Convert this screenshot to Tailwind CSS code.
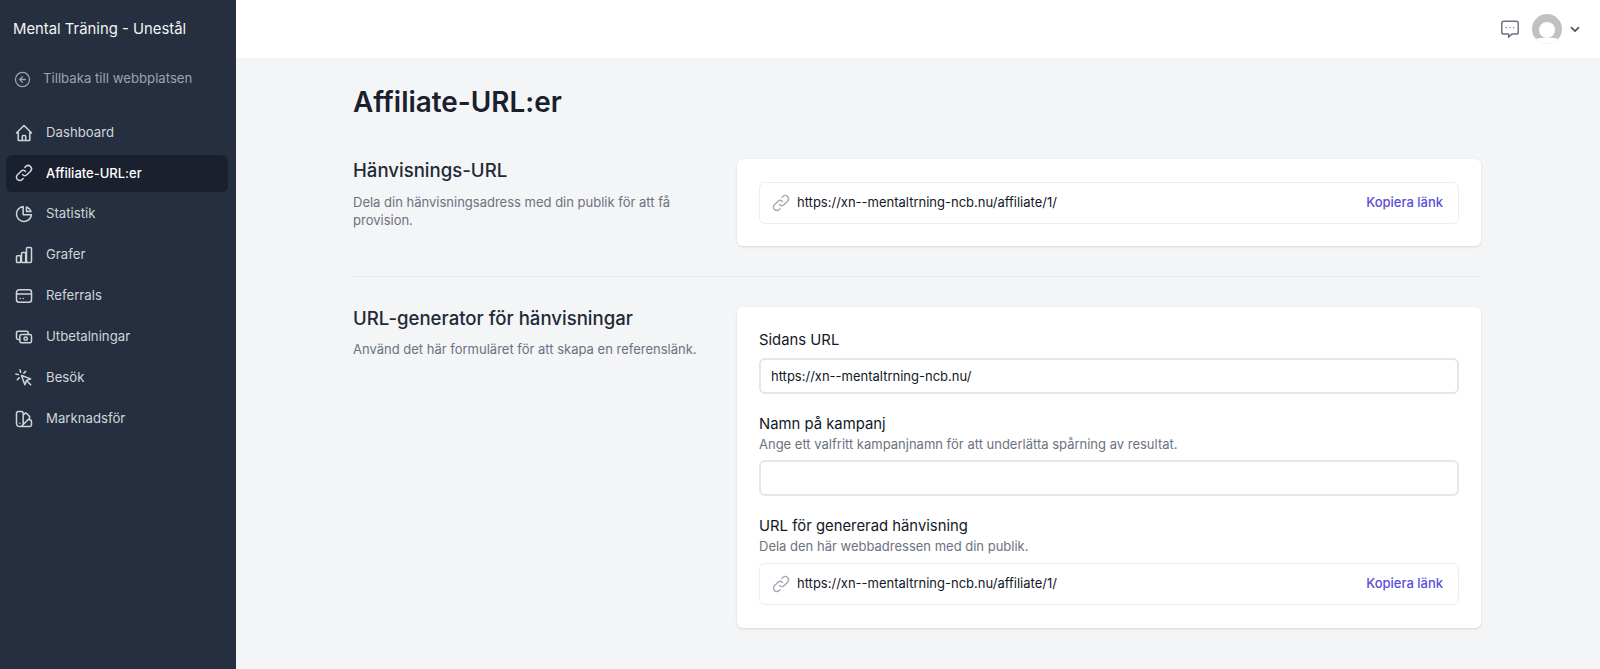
<!DOCTYPE html>
<html lang="sv">

<head>
    <meta charset="UTF-8">
    <meta name="viewport" content="width=device-width, initial-scale=1">
    <title>Affiliate-URL:er</title>
    <script src="https://cdn.jsdelivr.net/npm/@tailwindcss/browser@4"></script>
</head>

<body class="h-[669px] overflow-hidden flex bg-[#f3f5f6] font-['Inter',sans-serif] text-[#111827]">

    <!-- Sidebar -->
    <aside class="w-[236px] shrink-0 bg-[#252f3f] flex flex-col">
        <div class="h-[58px] flex items-center px-[13px] text-[14.85px] text-[#f3f4f6]">Mental Träning - Unestål</div>

        <a class="h-[40px] mt-[1px] flex items-center pl-[14px] text-[13.2px] text-[#9ca3af]">
            <svg class="w-[17px] h-[17px] mr-[12px]" fill="none" viewBox="0 0 24 24" stroke="currentColor" stroke-width="1.8">
                <circle cx="12" cy="12" r="10" />
                <path stroke-linecap="round" stroke-linejoin="round" d="M12 8l-4 4 4 4M8 12h8" />
            </svg>
            Tillbaka till webbplatsen
        </a>

        <nav class="mt-[15px] pl-[6px] pr-[8px] flex flex-col gap-[3.9px] text-[13.2px] text-[#d1d5db]">
            <a class="h-[37px] flex items-center pl-[8px] rounded-md">
                <svg class="w-[20px] h-[20px] mr-[12px]" fill="none" viewBox="0 0 24 24" stroke="currentColor" stroke-width="1.8">
                    <path stroke-linecap="round" stroke-linejoin="round" d="M3 12l2-2m0 0l7-7 7 7M5 10v10a1 1 0 001 1h3m10-11l2 2m-2-2v10a1 1 0 01-1 1h-3m-6 0a1 1 0 001-1v-4a1 1 0 011-1h2a1 1 0 011 1v4a1 1 0 001 1m-6 0h6" />
                </svg>
                Dashboard
            </a>
            <a class="h-[37px] flex items-center pl-[8px] rounded-md bg-[#1a202e] text-white text-[13px] font-medium">
                <svg class="w-[20px] h-[20px] mr-[12px] text-[#d1d5db]" fill="none" viewBox="0 0 24 24" stroke="currentColor" stroke-width="1.8">
                    <path stroke-linecap="round" stroke-linejoin="round" d="M13.828 10.172a4 4 0 00-5.656 0l-4 4a4 4 0 105.656 5.656l1.102-1.101m-.758-4.899a4 4 0 005.656 0l4-4a4 4 0 00-5.656-5.656l-1.1 1.1" />
                </svg>
                Affiliate-URL:er
            </a>
            <a class="h-[37px] flex items-center pl-[8px] rounded-md">
                <svg class="w-[20px] h-[20px] mr-[12px]" fill="none" viewBox="0 0 24 24" stroke="currentColor" stroke-width="1.8">
                    <path stroke-linecap="round" stroke-linejoin="round" d="M11 3.055A9.001 9.001 0 1020.945 13H11V3.055z" />
                    <path stroke-linecap="round" stroke-linejoin="round" d="M20.488 9H15V3.512A9.025 9.025 0 0120.488 9z" />
                </svg>
                Statistik
            </a>
            <a class="h-[37px] flex items-center pl-[8px] rounded-md">
                <svg class="w-[20px] h-[20px] mr-[12px]" fill="none" viewBox="0 0 24 24" stroke="currentColor" stroke-width="1.8">
                    <path stroke-linecap="round" stroke-linejoin="round" d="M3 14a1 1 0 011-1h3a1 1 0 011 1v6a1 1 0 01-1 1H4a1 1 0 01-1-1v-6zM9 10a1 1 0 011-1h3a1 1 0 011 1v11h-4a1 1 0 01-1-1V10zM15 4a1 1 0 011-1h3.5a1.5 1.5 0 011.5 1.5V19.5a1.5 1.5 0 01-1.5 1.5H16a1 1 0 01-1-1V4z" />
                </svg>
                Grafer
            </a>
            <a class="h-[37px] flex items-center pl-[8px] rounded-md">
                <svg class="w-[20px] h-[20px] mr-[12px]" fill="none" viewBox="0 0 24 24" stroke="currentColor" stroke-width="1.8">
                    <rect x="3" y="4.5" width="18" height="15" rx="3" />
                    <path stroke-linecap="round" d="M3 9.5h18M7.5 15h.01M11 15h.01" />
                </svg>
                Referrals
            </a>
            <a class="h-[37px] flex items-center pl-[8px] rounded-md">
                <svg class="w-[20px] h-[20px] mr-[12px]" fill="none" viewBox="0 0 24 24" stroke="currentColor" stroke-width="1.8">
                    <path stroke-linecap="round" stroke-linejoin="round" d="M17 9V7a2 2 0 00-2-2H5a2 2 0 00-2 2v6a2 2 0 002 2h2m2 4h10a2 2 0 002-2v-6a2 2 0 00-2-2H9a2 2 0 00-2 2v6a2 2 0 002 2zm7-5a2 2 0 11-4 0 2 2 0 014 0z" />
                </svg>
                Utbetalningar
            </a>
            <a class="h-[37px] flex items-center pl-[8px] rounded-md">
                <svg class="w-[20px] h-[20px] mr-[12px]" fill="none" viewBox="0 0 24 24" stroke="currentColor" stroke-width="1.8">
                    <path stroke-linecap="round" stroke-linejoin="round" d="M15 15l-2 5L9 9l11 4-5 2zm0 0l5 5M7.188 2.239l.777 2.897M5.136 7.965l-2.898-.777M13.95 4.05l-2.122 2.122m-5.657 5.656l-2.12 2.122" />
                </svg>
                Besök
            </a>
            <a class="h-[37px] flex items-center pl-[8px] rounded-md">
                <svg class="w-[20px] h-[20px] mr-[12px]" fill="none" viewBox="0 0 24 24" stroke="currentColor" stroke-width="1.8">
                    <path stroke-linecap="round" stroke-linejoin="round" d="M7 21a4 4 0 01-4-4V5a2 2 0 012-2h4a2 2 0 012 2v12a4 4 0 01-4 4zm0 0h12a2 2 0 002-2v-4a2 2 0 00-2-2h-2.343M11 7.343l1.657-1.657a2 2 0 012.828 0l2.829 2.829a2 2 0 010 2.828l-8.486 8.485M7 17h.01" />
                </svg>
                Marknadsför
            </a>
        </nav>
    </aside>

    <div class="flex-1 min-w-0 flex flex-col">
        <!-- Top bar -->
        <header class="h-[58px] shrink-0 bg-white flex items-center justify-end pr-[18px]">
            <svg class="w-[22px] h-[22px] text-[#6b7280]" fill="none" viewBox="0 0 24 24" stroke="currentColor" stroke-width="1.6">
                <path stroke-linejoin="round" d="M5 3.5h14a2 2 0 012 2v10a2 2 0 01-2 2h-5l-3.5 3.5v-3.5H5a2 2 0 01-2-2v-10a2 2 0 012-2z" />
                <path stroke-linecap="round" d="M8 10.5h.01M12 10.5h.01M16 10.5h.01" />
            </svg>
            <div class="ml-[11px] w-[30px] h-[30px] rounded-full bg-[#c1c1c1] overflow-hidden relative">
                <div class="absolute left-[7px] top-[8px] w-[16px] h-[16px] rounded-full bg-white"></div>
                <div class="absolute left-[-2px] top-[24px] w-[34px] h-[20px] rounded-full bg-white"></div>
            </div>
            <svg class="ml-[6px] w-[14px] h-[14px] text-[#4b5563]" fill="none" viewBox="0 0 20 20" stroke="currentColor" stroke-width="2.4">
                <path stroke-linecap="round" stroke-linejoin="round" d="M5 8l5 5 5-5" />
            </svg>
        </header>

        <main class="pl-[117px] pr-[119px]">
            <h1 class="mt-[26px] text-[27.9px] leading-[36px] font-semibold text-[#1a202c]">Affiliate-URL:er</h1>

            <!-- Referral URL -->
            <section class="mt-[39px] flex">
                <div class="w-[384px] shrink-0">
                    <h2 class="mt-[-1px] text-[18.6px] leading-[24px] font-medium text-[#1f2937]">Hänvisnings-URL</h2>
                    <p class="mt-[11px] w-[340px] text-[13px] leading-[18.4px] text-[#6b7280]">Dela din hänvisningsadress med din publik för att få provision.</p>
                </div>
                <div class="flex-1 h-[87px] bg-white rounded-md shadow-sm px-[22px] pt-[23px]">
                    <div class="h-[42px] border border-[#eceef1] rounded-md flex items-center pl-[11px] pr-[15px] text-[13px]">
                        <svg class="w-[20px] h-[20px] mr-[6px] text-[#a3a8b2]" fill="none" viewBox="0 0 24 24" stroke="currentColor" stroke-width="1.6">
                            <path stroke-linecap="round" stroke-linejoin="round" d="M13.828 10.172a4 4 0 00-5.656 0l-4 4a4 4 0 105.656 5.656l1.102-1.101m-.758-4.899a4 4 0 005.656 0l4-4a4 4 0 00-5.656-5.656l-1.1 1.1" />
                        </svg>
                        <span class="flex-1">https://xn--mentaltrning-ncb.nu/affiliate/1/</span>
                        <span class="font-medium text-[#5a50d6]">Kopiera länk</span>
                    </div>
                </div>
            </section>

            <hr class="mt-[30px] border-[#e8eaed]">

            <!-- URL generator -->
            <section class="mt-[30px] flex">
                <div class="w-[384px] shrink-0">
                    <h2 class="mt-[-1px] text-[18.6px] leading-[24px] font-medium text-[#1f2937]">URL-generator för hänvisningar</h2>
                    <p class="mt-[10px] text-[13px] leading-[18px] text-[#6b7280]">Använd det här formuläret för att skapa en referenslänk.</p>
                </div>
                <div class="flex-1 h-[321px] bg-white rounded-md shadow-sm px-[22px] pt-[23px]">
                    <label class="block text-[14.85px] leading-[20px]">Sidans URL</label>
                    <input class="mt-[8px] block w-full h-[36px] px-[10px] border-2 border-[#e5e7eb] rounded-md text-[13px] bg-white" value="https://xn--mentaltrning-ncb.nu/">

                    <label class="mt-[20px] block text-[14.85px] leading-[20px]">Namn på kampanj</label>
                    <p class="mt-[1px] text-[13px] leading-[18px] text-[#6b7280]">Ange ett valfritt kampanjnamn för att underlätta spårning av resultat.</p>
                    <input class="mt-[7px] block w-full h-[36px] px-[10px] border-2 border-[#e5e7eb] rounded-md text-[13px] bg-white">

                    <label class="mt-[20px] block text-[14.85px] leading-[20px]">URL för genererad hänvisning</label>
                    <p class="mt-[1px] text-[13px] leading-[18px] text-[#6b7280]">Dela den här webbadressen med din publik.</p>
                    <div class="mt-[8px] h-[42px] border border-[#eceef1] rounded-md flex items-center pl-[11px] pr-[15px] text-[13px]">
                        <svg class="w-[20px] h-[20px] mr-[6px] text-[#a3a8b2]" fill="none" viewBox="0 0 24 24" stroke="currentColor" stroke-width="1.6">
                            <path stroke-linecap="round" stroke-linejoin="round" d="M13.828 10.172a4 4 0 00-5.656 0l-4 4a4 4 0 105.656 5.656l1.102-1.101m-.758-4.899a4 4 0 005.656 0l4-4a4 4 0 00-5.656-5.656l-1.1 1.1" />
                        </svg>
                        <span class="flex-1">https://xn--mentaltrning-ncb.nu/affiliate/1/</span>
                        <span class="font-medium text-[#5a50d6]">Kopiera länk</span>
                    </div>
                </div>
            </section>
        </main>
    </div>

</body>

</html>
